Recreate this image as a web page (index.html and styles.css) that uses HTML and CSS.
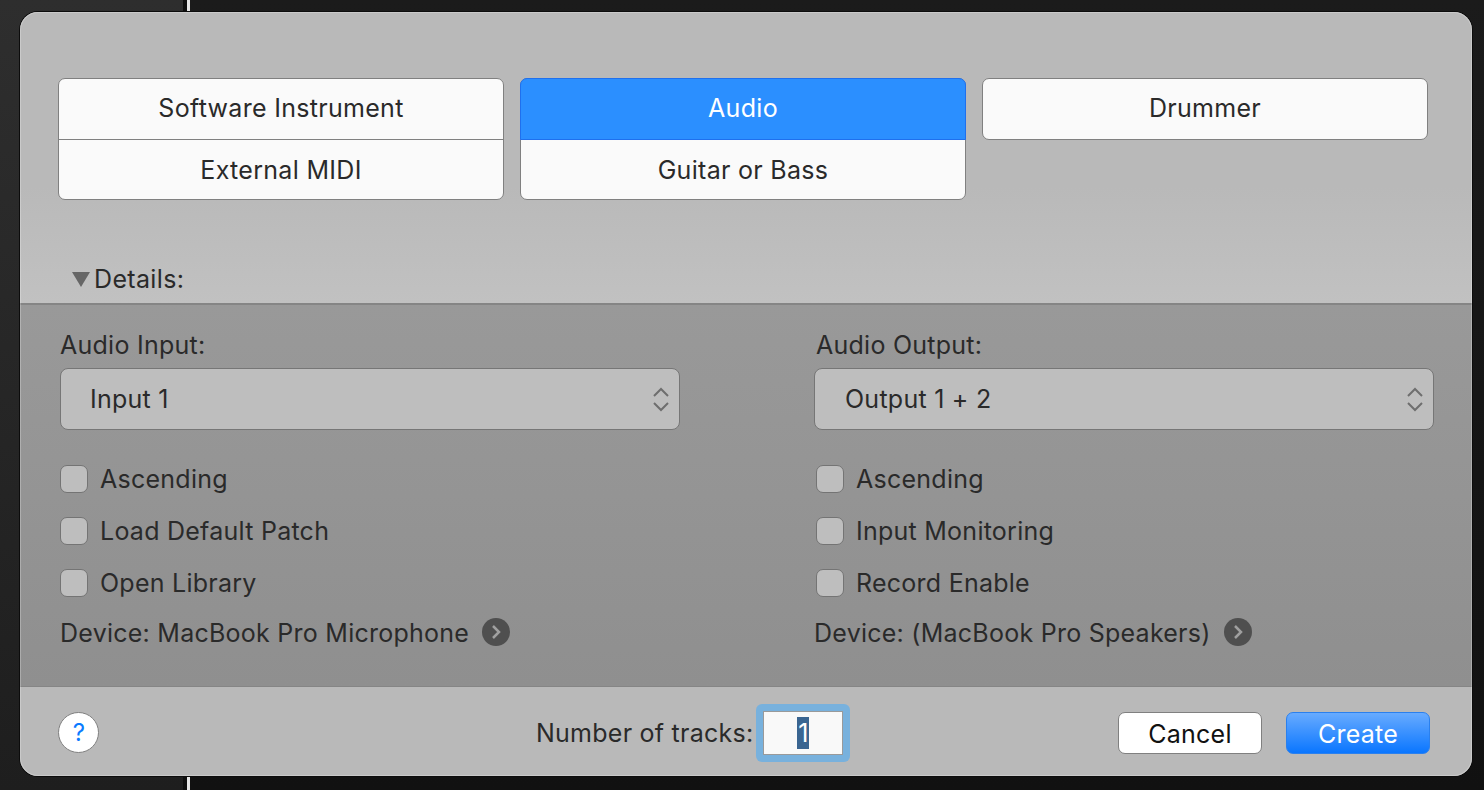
FILE: index.html
```html
<!DOCTYPE html>
<html lang="en">
<head>
    <meta charset="UTF-8">
    <title>New Tracks</title>
    <link rel="stylesheet" href="styles.css">
</head>
<body>
<div class="dialog">
    <div class="top">
        <div class="types">
            <div class="type-group">
                <div class="type">Software Instrument</div>
                <div class="type">External MIDI</div>
            </div>
            <div class="type-group">
                <div class="type type-active">Audio</div>
                <div class="type">Guitar or Bass</div>
            </div>
            <div class="type-group type-single">
                <div class="type">Drummer</div>
            </div>
        </div>
        <div class="details-toggle">
            <span class="triangle"></span>
            <span>Details:</span>
        </div>
    </div>

    <div class="details">
        <div class="column">
            <div class="field-label">Audio Input:</div>
            <div class="select">
                <span>Input 1</span>
                <svg class="stepper" width="16" height="25" viewBox="0 0 16 25"><path d="M1 9 8 2l7 7M1 16l7 7 7-7"/></svg>
            </div>
            <div class="check-row"><span class="check"></span>Ascending</div>
            <div class="check-row"><span class="check"></span>Load Default Patch</div>
            <div class="check-row"><span class="check"></span>Open Library</div>
            <div class="device">
                <span>Device: MacBook Pro Microphone</span>
                <svg class="arrow" width="28" height="28" viewBox="0 0 28 28"><circle cx="14" cy="14" r="14"/><path d="m11 8 6 6-6 6"/></svg>
            </div>
        </div>
        <div class="column column-right">
            <div class="field-label">Audio Output:</div>
            <div class="select">
                <span>Output 1 + 2</span>
                <svg class="stepper" width="16" height="25" viewBox="0 0 16 25"><path d="M1 9 8 2l7 7M1 16l7 7 7-7"/></svg>
            </div>
            <div class="check-row"><span class="check"></span>Ascending</div>
            <div class="check-row"><span class="check"></span>Input Monitoring</div>
            <div class="check-row"><span class="check"></span>Record Enable</div>
            <div class="device">
                <span>Device: (MacBook Pro Speakers)</span>
                <svg class="arrow" width="28" height="28" viewBox="0 0 28 28"><circle cx="14" cy="14" r="14"/><path d="m11 8 6 6-6 6"/></svg>
            </div>
        </div>
    </div>

    <div class="footer">
        <div class="help">?</div>
        <div class="tracks">
            <span>Number of tracks:</span>
            <div class="tracks-ring">
                <div class="tracks-input"><span class="selected">1</span></div>
            </div>
        </div>
        <div class="actions">
            <div class="btn">Cancel</div>
            <div class="btn btn-primary">Create</div>
        </div>
    </div>
</div>
</body>
</html>
```

FILE: styles.css
```css
* {
    box-sizing: border-box;
}

html, body {
    height: 100%;
}

body {
    margin: 0;
    padding: 12px 12px 14px 20px;
    overflow: hidden;
    font-family: Inter, "Liberation Sans", sans-serif;
    font-size: 25px;
    letter-spacing: 0.25px;
    color: #2a2a2a;
    background:
        linear-gradient(180deg, #2e2e2e, #1e1e1e) 0 0 / 183px 100% no-repeat,
        linear-gradient(90deg, #0f0f0f 0, #0f0f0f 187px, #e6e6e6 187px, #e6e6e6 190px, transparent 190px) 0 0 / 190px 100% no-repeat,
        linear-gradient(180deg, #1b1b1b, #111);
}

.dialog {
    position: relative;
    height: 764px;
    display: flex;
    flex-direction: column;
    border-radius: 18px;
    overflow: hidden;
    background: #b9b9b9;
    box-shadow: 0 0 0 1px #0c0c0c;
}

/* light edge over the panes */
.dialog::after {
    content: "";
    position: absolute;
    inset: 0;
    border-radius: inherit;
    box-shadow: inset 0 0 0 1px rgba(255, 255, 255, 0.25);
    pointer-events: none;
}

.top {
    height: 291px;
    padding: 66px 44px 0 38px;
    display: flex;
    flex-direction: column;
    background: linear-gradient(180deg, #b9b9b9 0, #b9b9b9 60%, #c1c1c1 100%);
}

.types {
    display: grid;
    grid-template-columns: repeat(3, 446px);
    gap: 16px;
    align-items: start;
}

.type-group {
    background: #fafafa;
    border: 1px solid #808080;
    border-radius: 7px;
}

.type {
    height: 60px;
    padding-bottom: 2px;
    display: flex;
    align-items: center;
    justify-content: center;
    letter-spacing: 0.3px;
}

.type + .type {
    height: 60px;
    padding-bottom: 0;
    border-top: 1px solid #808080;
}

/* sits over the group border, so it has a blue edge of its own */
.type-active {
    height: 62px;
    margin: -1px -1px 0;
    background: #2b8fff;
    color: #fff;
    border: 1px solid #1f70ee;
    border-radius: 7px 7px 0 0;
}

.type-active + .type {
    height: 59px;
    padding-top: 1px;
    border-top: 0;
}

.details-toggle {
    margin-top: 64px;
    margin-left: 14px;
    display: flex;
    align-items: center;
    gap: 4px;
    line-height: 30px;
    letter-spacing: 0.35px;
}

.triangle {
    width: 0;
    height: 0;
    border-left: 9px solid transparent;
    border-right: 9px solid transparent;
    border-top: 15px solid #666;
}

.details {
    height: 384px;
    padding: 25px 0 0 40px;
    display: grid;
    grid-template-columns: 754px 1fr;
    background: linear-gradient(180deg, #999 0, #8f8f8f 100%);
    border-top: 2px solid #858585;
    border-bottom: 1px solid #858585;
}

.column {
    display: flex;
    flex-direction: column;
}

.field-label {
    height: 30px;
    line-height: 30px;
}

.column-right .field-label {
    margin-left: 2px;
}

.select {
    width: 620px;
    height: 62px;
    margin-top: 8px;
    padding: 0 10px 0 29px;
    display: flex;
    align-items: center;
    justify-content: space-between;
    background: #bebebe;
    border: 1px solid #767676;
    border-radius: 8px;
}

.column-right .select {
    padding-left: 30px;
}

.stepper path {
    fill: none;
    stroke: #6e6e6e;
    stroke-width: 2;
}

.check-row {
    height: 52px;
    display: flex;
    align-items: center;
    gap: 12px;
}

.column-right .check-row {
    margin-left: 2px;
}

.select + .check-row {
    margin-top: 23px;
}

.check {
    width: 28px;
    height: 28px;
    background: #bebebe;
    border: 1px solid #747474;
    border-radius: 7px;
}

.device {
    height: 28px;
    margin-top: 10px;
    display: flex;
    align-items: center;
    gap: 13px;
}

.arrow {
    position: relative;
    top: -1px;
}

.arrow circle {
    fill: #4f4f4f;
}

.arrow path {
    fill: none;
    stroke: #a0a0a0;
    stroke-width: 2.5;
}

.footer {
    flex: 1;
    padding: 3px 42px 0 38px;
    display: flex;
    align-items: center;
    background: #b9b9b9;
}

.help {
    width: 41px;
    height: 41px;
    padding-left: 1px;
    margin-bottom: 1px;
    display: flex;
    align-items: center;
    justify-content: center;
    font-size: 24px;
    color: #0a7bff;
    background: #fff;
    border: 1px solid #808080;
    border-radius: 50%;
}

.tracks {
    margin-left: 437px;
    display: flex;
    align-items: center;
    gap: 3px;
}

.tracks-ring {
    padding: 7px;
    background: #78b1dd;
    border-radius: 6px;
}

.tracks-input {
    width: 80px;
    height: 44px;
    display: flex;
    align-items: center;
    justify-content: center;
    background: #f9f9f9;
    border: 1px solid #9a9a9a;
}

.selected {
    width: 12px;
    height: 32px;
    line-height: 32px;
    text-align: center;
    background: #3a6591;
    color: #fff;
}

.actions {
    margin-left: auto;
    display: flex;
    gap: 24px;
}

.btn {
    width: 144px;
    height: 42px;
    padding-top: 1px;
    display: flex;
    align-items: center;
    justify-content: center;
    color: #111;
    background: #fff;
    border: 1px solid #808080;
    border-radius: 7px;
}

.btn-primary {
    color: #fff;
    background: linear-gradient(180deg, #68abff 0, #0a76ff 100%);
    border-color: #2a80ee;
}
```
